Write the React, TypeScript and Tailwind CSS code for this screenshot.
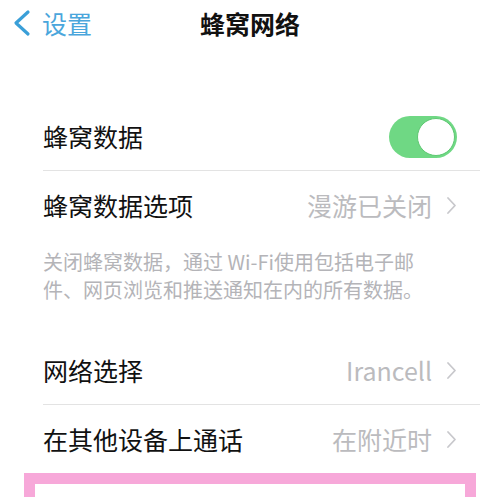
import React from 'react'

const font = { fontFamily: '"Noto Sans CJK SC", "Noto Sans", sans-serif' }

const Chevron = () => (
  <svg width="11" height="19" viewBox="0 0 11 19" className="shrink-0">
    <path d="M2 2 L9 9.5 L2 17" fill="none" stroke="#c8c8cc" strokeWidth="1.8" strokeLinecap="round" strokeLinejoin="round" />
  </svg>
)

interface RowProps {
  label: string
  value?: string
  last?: boolean
  children?: React.ReactNode
}

const Row: React.FC<RowProps> = ({ label, value, last, children }) => (
  <div className={`flex h-[68px] items-center justify-between pr-[23px] ${last ? '' : 'border-b border-[#e3e3e3]'}`}>
    <span className="text-[25px] leading-none text-[#111]">{label}</span>
    {children ?? (
      <div className="flex items-center gap-[14px]">
        <span className="text-[25px] leading-none text-[#bbbbbe]">{value}</span>
        <Chevron />
      </div>
    )}
  </div>
)

const Toggle = () => (
  <div className="flex h-[42px] w-[68px] items-center justify-end rounded-full bg-[#6fd884] p-[2px]">
    <div className="h-[38px] w-[38px] rounded-full border border-[#5fc873] bg-white" />
  </div>
)

export default function App() {
  return (
    <div className="h-[497px] w-[500px] overflow-hidden bg-white" style={font}>
      {/* 顶部导航 */}
      <header className="grid h-[46px] grid-cols-[1fr_auto_1fr] items-center">
        <div className="flex items-center gap-[10px] pl-[12px] text-[#4aa6dc]">
          <svg width="20" height="28" viewBox="0 0 20 28">
            <path d="M16 3 L4 14 L16 25" fill="none" stroke="#3a9fd8" strokeWidth="3.2" strokeLinecap="round" strokeLinejoin="round" />
          </svg>
          <span className="text-[25px] leading-none">设置</span>
        </div>
        <h1 className="text-[25px] font-bold leading-none text-[#111]">蜂窝网络</h1>
        <div />
      </header>

      <div className="ml-[43px] mr-[20px] mt-[57px]">
        <Row label="蜂窝数据">
          <Toggle />
        </Row>
        <Row label="蜂窝数据选项" value="漫游已关闭" last />
      </div>

      <p className="ml-[43px] w-[390px] pt-[9px] text-[20px] leading-[28px] text-[#b4b4b8]">
        关闭蜂窝数据，通过 Wi-Fi使用包括电子邮件、网页浏览和推送通知在内的所有数据。
      </p>

      <div className="ml-[43px] mr-[20px] mt-[33px]">
        <Row label="网络选择" value="Irancell" />
        <Row label="在其他设备上通话" value="在附近时" last />
      </div>

      {/* 粉色框 */}
      <div className="mx-[24px] h-[60px] border-[11px] border-[#f7a8d9] bg-white" />
    </div>
  )
}
